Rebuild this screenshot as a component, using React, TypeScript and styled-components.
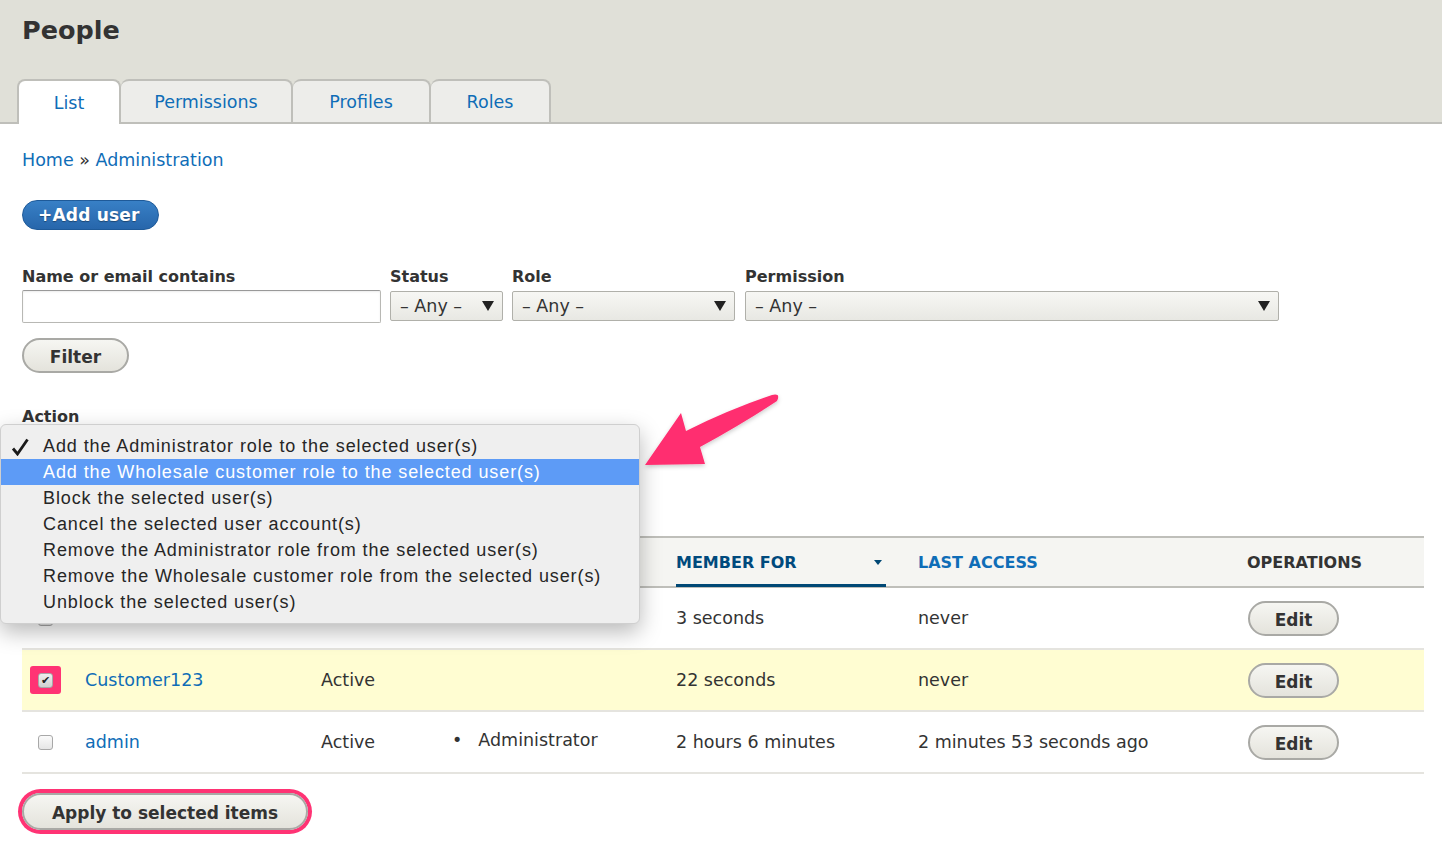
import React from 'react';
import styled, { createGlobalStyle } from 'styled-components';

const LINK = '#0f6db7';
const TEXT = '#333333';

const GlobalStyle = createGlobalStyle`
    html, body {
        margin: 0;
        padding: 0;
        background: #ffffff;
    }
    body {
        font-family: "DejaVu Sans", Verdana, sans-serif;
        color: ${TEXT};
    }
`;

const Page = styled.div`
    position: relative;
    width: 1442px;
    min-height: 868px;
    overflow: hidden;
`;

const Header = styled.header`
    background: #e0e0d8;
    padding: 12px 0 0 17px;
    border-bottom: 2px solid #bfbfba;
`;

const Title = styled.h1`
    margin: 0 0 31px 5px;
    font-size: 25.5px;
    line-height: 36px;
    font-weight: bold;
    color: #333;
`;

const Tabs = styled.nav`
    display: flex;
    margin-bottom: -2px;
`;

const Tab = styled.a<{ $active?: boolean; $width: number }>`
    display: flex;
    align-items: center;
    justify-content: center;
    box-sizing: border-box;
    width: ${p => p.$width}px;
    height: 45px;
    padding-bottom: 0;
    border: 2px solid #bfbfba;
    border-bottom: ${p => (p.$active ? 'none' : '2px solid #bfbfba')};
    border-left-width: ${p => (p.$active ? '2px' : '0')};
    border-radius: 8px 8px 0 0;
    background: ${p => (p.$active ? '#ffffff' : '#ededea')};
    color: ${LINK};
    font-size: 17.5px;
    text-decoration: none;
    &:first-child {
        border-left-width: 2px;
    }
`;

const Content = styled.main`
    padding: 0 18px 0 22px;
`;

const Breadcrumb = styled.div`
    margin-top: 25px;
    font-size: 17.5px;
    line-height: 22px;
    color: ${TEXT};
`;

const Link = styled.a`
    color: ${LINK};
    text-decoration: none;
`;

const PrimaryButton = styled.button`
    display: block;
    margin-top: 29px;
    height: 30px;
    padding: 0 18px 0 15px;
    border: 1px solid #1e5a99;
    border-radius: 16px;
    background: linear-gradient(#3880c6, #2766ab);
    color: #ffffff;
    font-family: "DejaVu Sans", Verdana, sans-serif;
    font-size: 17px;
    font-weight: bold;
    letter-spacing: 0.2px;
    text-shadow: 0 1px 1px rgba(0, 0, 0, 0.35);
`;

const Filters = styled.div`
    display: flex;
    align-items: flex-start;
    gap: 9px;
    margin-top: 36px;
`;

const Field = styled.div<{ $width: number }>`
    display: flex;
    flex-direction: column;
    width: ${p => p.$width}px;
`;

const Label = styled.label`
    font-size: 16px;
    line-height: 22px;
    font-weight: bold;
    color: #333;
    margin-bottom: 2px;
`;

const TextInput = styled.div`
    box-sizing: border-box;
    height: 33px;
    border: 1px solid #b8b8b4;
    border-top-color: #999;
    border-radius: 2px;
    background: #fff;
    box-shadow: inset 0 1px 2px rgba(0, 0, 0, 0.08);
`;

const Select = styled.div`
    box-sizing: border-box;
    display: flex;
    align-items: center;
    justify-content: space-between;
    height: 30px;
    margin-top: 1px;
    padding: 0 8px 0 9px;
    border: 1px solid #b0b0aa;
    border-radius: 2px;
    background: linear-gradient(#f7f7f4, #e8e8e3);
    font-size: 17.5px;
    color: #333;
`;

const Caret = styled.span`
    width: 0;
    height: 0;
    border-left: 6px solid transparent;
    border-right: 6px solid transparent;
    border-top: 10px solid #222;
`;

const Button = styled.button<{ $ring?: boolean }>`
    display: inline-flex;
    align-items: center;
    justify-content: center;
    box-sizing: border-box;
    height: 35px;
    padding: 2px 26px 0;
    border: 2px solid #a9a9a5;
    border-radius: 20px;
    background: linear-gradient(#f6f6f2, #e4e3dc);
    color: #333;
    font-family: "DejaVu Sans", Verdana, sans-serif;
    font-size: 17px;
    font-weight: bold;
    box-shadow: ${p => (p.$ring ? '0 0 0 4px #ff3374' : 'none')};
`;

const FilterButton = styled(Button)`
    margin-top: 15px;
    width: 107px;
`;

const ActionField = styled.div`
    position: relative;
    margin-top: 33px;
`;

const ActionLabel = styled(Label)`
    display: block;
    margin-bottom: 3px;
`;

const ActionSelect = styled(Select)`
    width: 470px;
`;

const TopApply = styled(Button)`
    margin-top: 14px;
`;

const Popup = styled.ul`
    position: absolute;
    top: 18px;
    left: -22px;
    width: 640px;
    box-sizing: border-box;
    margin: 0;
    padding: 8px 0 8px;
    list-style: none;
    background: #efefef;
    border: 1px solid #cfcfcf;
    border-radius: 6px;
    box-shadow: 0 8px 22px rgba(0, 0, 0, 0.28);
    z-index: 5;
`;

const Option = styled.li<{ $highlight?: boolean }>`
    position: relative;
    height: 26px;
    line-height: 26px;
    padding-left: 42px;
    font-family: "Liberation Sans", Arial, sans-serif;
    font-size: 18px;
    letter-spacing: 0.9px;
    color: ${p => (p.$highlight ? '#ffffff' : '#262626')};
    background: ${p => (p.$highlight ? '#5d9bf6' : 'transparent')};
`;

const Check = styled.svg`
    position: absolute;
    left: 10px;
    top: 5px;
`;

const Table = styled.div`
    margin-top: 26px;
`;

const COLUMNS = '63px 236px 131px 224px 242px 329px 1fr';

const HeadRow = styled.div`
    display: grid;
    grid-template-columns: ${COLUMNS};
    height: 48px;
    background: #f5f5f2;
    border-top: 2px solid #bfbfba;
    border-bottom: 2px solid #bfbfba;
`;

const HeadCell = styled.div<{ $link?: boolean; $sorted?: boolean }>`
    display: flex;
    align-items: center;
    position: relative;
    font-size: 16px;
    font-weight: bold;
    text-transform: uppercase;
    color: ${p => (p.$sorted ? '#004a7d' : p.$link ? LINK : '#333')};
`;

const SortedInner = styled.div`
    display: flex;
    align-items: center;
    justify-content: space-between;
    box-sizing: border-box;
    width: 210px;
    height: 100%;
    padding-top: 1px;
    padding-right: 4px;
    border-bottom: 3px solid #004875;
    margin-bottom: -2px;
`;

const SortArrow = styled.span`
    width: 0;
    height: 0;
    border-left: 4px solid transparent;
    border-right: 4px solid transparent;
    border-top: 5px solid #004875;
`;

const Row = styled.div<{ $selected?: boolean }>`
    display: grid;
    grid-template-columns: ${COLUMNS};
    align-items: center;
    height: 60px;
    border-bottom: 2px solid #e5e4df;
    background: ${p => (p.$selected ? '#fffdd2' : '#ffffff')};
    font-size: 17.5px;
    color: #333;
`;

const Cell = styled.div`
    display: flex;
    align-items: center;
`;

const CheckCell = styled(Cell)`
    padding-left: 8px;
`;

const CheckFrame = styled.span<{ $ring?: boolean }>`
    display: inline-flex;
    align-items: center;
    justify-content: center;
    width: 31px;
    height: 28px;
    border-radius: 3px;
    background: ${p => (p.$ring ? '#ff3374' : 'transparent')};
`;

const Checkbox = styled.span<{ $checked?: boolean }>`
    display: inline-flex;
    align-items: center;
    justify-content: center;
    box-sizing: border-box;
    width: 15px;
    height: 15px;
    border: 1px solid #a8a8a8;
    border-radius: 3px;
    background: ${p => (p.$checked ? 'linear-gradient(#eeeeee, #d0d0d0)' : 'linear-gradient(#fafafa, #e6e6e6)')};
    font-size: 11px;
    line-height: 1;
    color: #222;
`;

const RoleList = styled.ul`
    margin: -4px 0 0;
    padding: 0;
    list-style: none;
`;

const RoleItem = styled.li`
    display: flex;
    gap: 16px;
    &::before {
        content: '•';
    }
`;

const EditButton = styled(Button)`
    width: 91px;
    padding: 3px 0 0;
    margin-left: 1px;
`;

const BottomApply = styled(Button)`
    margin-top: 19px;
    height: 37px;
    width: 286px;
    padding: 2px 0 0;
`;

const ArrowLayer = styled.svg`
    position: absolute;
    top: 0;
    left: 0;
    pointer-events: none;
    z-index: 10;
`;

const actions = [
    'Add the Administrator role to the selected user(s)',
    'Add the Wholesale customer role to the selected user(s)',
    'Block the selected user(s)',
    'Cancel the selected user account(s)',
    'Remove the Administrator role from the selected user(s)',
    'Remove the Wholesale customer role from the selected user(s)',
    'Unblock the selected user(s)',
];

interface User {
    name: string;
    status: string;
    roles: string[];
    memberFor: string;
    lastAccess: string;
    selected?: boolean;
}

const users: User[] = [
    { name: 'Another customer', status: 'Active', roles: [], memberFor: '3 seconds', lastAccess: 'never' },
    { name: 'Customer123', status: 'Active', roles: [], memberFor: '22 seconds', lastAccess: 'never', selected: true },
    {
        name: 'admin',
        status: 'Active',
        roles: ['Administrator'],
        memberFor: '2 hours 6 minutes',
        lastAccess: '2 minutes 53 seconds ago',
    },
];

const App = () => (
    <Page>
        <GlobalStyle />
        <Header>
            <Title>People</Title>
            <Tabs>
                <Tab $active $width={104}>List</Tab>
                <Tab $width={172}>Permissions</Tab>
                <Tab $width={138}>Profiles</Tab>
                <Tab $width={120}>Roles</Tab>
            </Tabs>
        </Header>
        <Content>
            <Breadcrumb>
                <Link href="#">Home</Link> » <Link href="#">Administration</Link>
            </Breadcrumb>
            <PrimaryButton>+Add user</PrimaryButton>
            <Filters>
                <Field $width={359}>
                    <Label>Name or email contains</Label>
                    <TextInput />
                </Field>
                <Field $width={113}>
                    <Label>Status</Label>
                    <Select>
                        – Any – <Caret />
                    </Select>
                </Field>
                <Field $width={223}>
                    <Label>Role</Label>
                    <Select>
                        – Any – <Caret />
                    </Select>
                </Field>
                <Field $width={534} style={{ marginLeft: 1 }}>
                    <Label>Permission</Label>
                    <Select>
                        – Any – <Caret />
                    </Select>
                </Field>
            </Filters>
            <FilterButton>Filter</FilterButton>
            <ActionField>
                <ActionLabel>Action</ActionLabel>
                <ActionSelect>
                    {actions[1]} <Caret />
                </ActionSelect>
                <TopApply>Apply to selected items</TopApply>
                <Popup>
                    {actions.map((action, i) => (
                        <Option key={action} $highlight={i === 1}>
                            {i === 0 && (
                                <Check width="18" height="18" viewBox="0 0 18 18">
                                    <path d="M2 10.5 L6.5 16 L16.5 1.5" fill="none" stroke="#1a1a1a" strokeWidth="2.8" />
                                </Check>
                            )}
                            {action}
                        </Option>
                    ))}
                </Popup>
            </ActionField>
            <Table>
                <HeadRow>
                    <CheckCell>
                        <CheckFrame>
                            <Checkbox />
                        </CheckFrame>
                    </CheckCell>
                    <HeadCell $link>Username</HeadCell>
                    <HeadCell $link>Status</HeadCell>
                    <HeadCell>Roles</HeadCell>
                    <HeadCell $sorted>
                        <SortedInner>
                            Member for <SortArrow />
                        </SortedInner>
                    </HeadCell>
                    <HeadCell $link>Last access</HeadCell>
                    <HeadCell>Operations</HeadCell>
                </HeadRow>
                {users.map(user => (
                    <Row key={user.name} $selected={user.selected}>
                        <CheckCell>
                            <CheckFrame $ring={user.selected}>
                                <Checkbox $checked={user.selected}>{user.selected ? '✔' : ''}</Checkbox>
                            </CheckFrame>
                        </CheckCell>
                        <Cell>
                            <Link href="#">{user.name}</Link>
                        </Cell>
                        <Cell>{user.status}</Cell>
                        <Cell>
                            <RoleList>
                                {user.roles.map(role => (
                                    <RoleItem key={role}>{role}</RoleItem>
                                ))}
                            </RoleList>
                        </Cell>
                        <Cell>{user.memberFor}</Cell>
                        <Cell>{user.lastAccess}</Cell>
                        <Cell>
                            <EditButton>Edit</EditButton>
                        </Cell>
                    </Row>
                ))}
            </Table>
            <BottomApply $ring>Apply to selected items</BottomApply>
        </Content>
        <ArrowLayer width="1442" height="868" viewBox="0 0 1442 868">
            <defs>
                <filter id="arrowShadow" x="-20%" y="-20%" width="140%" height="140%">
                    <feDropShadow dx="0" dy="2" stdDeviation="2" floodColor="#000" floodOpacity="0.2" />
                </filter>
            </defs>
            <path
                d="M645 465 L681 413 L686 431 Q728 410 772 395 Q781 393 777 401 Q742 424 700 447 L705 464 Z"
                fill="#ff2d6f"
                filter="url(#arrowShadow)"
            />
        </ArrowLayer>
    </Page>
);

export default App;
